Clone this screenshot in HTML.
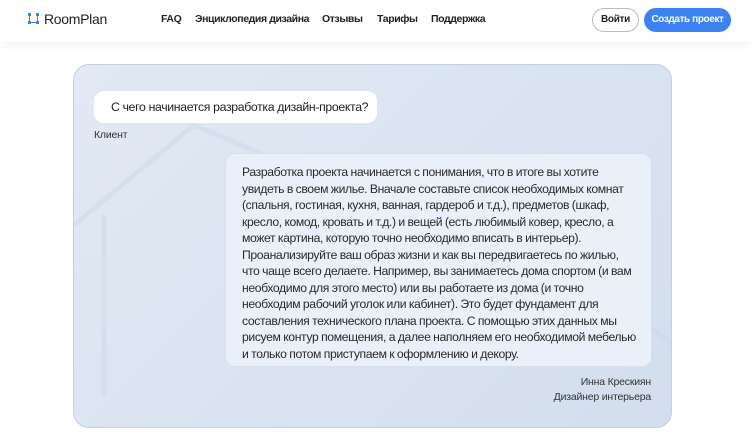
<!DOCTYPE html>
<html><head><meta charset="utf-8"><style>
*{margin:0;padding:0;box-sizing:border-box}
body{width:751px;height:435px;overflow:hidden;background:#fff;font-family:"Liberation Sans",sans-serif;color:#222;position:relative}
.hdr{position:absolute;left:0;top:0;width:751px;height:42px;background:#fff;box-shadow:0 2px 10px rgba(0,0,0,.06)}
.logo{position:absolute;left:44px;top:11px;font-size:14px;color:#222;letter-spacing:-0.3px}
.nav{position:absolute;top:13px;font-size:10.5px;font-weight:bold;color:#222;letter-spacing:-0.4px;white-space:nowrap}
.btn1{position:absolute;left:592px;top:8px;width:47px;height:24px;border:1px solid #bbb;border-radius:12px;font-size:10px;font-weight:bold;text-align:center;line-height:22px;letter-spacing:-0.3px}
.btn2{position:absolute;left:644px;top:8px;width:87px;height:24px;background:#3b82f0;color:#fff;border-radius:12px;font-size:10px;font-weight:bold;text-align:center;line-height:24px;letter-spacing:-0.4px;white-space:nowrap}
.panel{position:absolute;left:73px;top:64px;width:599px;height:364px;border-radius:16px;background:linear-gradient(135deg,#e2e9f4,#d3deee);border:1px solid #c5d0de;overflow:hidden}
.q{position:absolute;left:20px;top:26px;width:283px;height:32px;background:#fff;border-radius:10px;font-size:12.3px;line-height:32px;padding-left:17px;color:#222;white-space:nowrap;letter-spacing:-0.35px}
.small{position:absolute;font-size:10.5px;color:#333;letter-spacing:-0.2px}
.a{position:absolute;left:151px;top:88px;width:427px;height:214px;background:#e9f0f9;border:1px solid #d6e0ec;border-radius:10px;padding:10px 6px 0 16px;font-size:12.2px;line-height:16.5px;color:#2a2a2a;letter-spacing:-0.38px;word-spacing:-0.3px;white-space:nowrap}
</style></head><body>
<div class="hdr">
<svg style="position:absolute;left:28px;top:13px" width="11" height="11" viewBox="0 0 11 11"><g fill="#3b82f0"><rect x="0" y="0" width="3" height="3"/><rect x="8" y="0" width="3" height="3"/><rect x="0" y="8" width="3" height="3"/><rect x="8" y="8" width="3" height="3"/></g><g stroke="#3b82f0" stroke-width="1"><line x1="1.5" y1="3" x2="1.5" y2="8"/><line x1="9.5" y1="3" x2="9.5" y2="8"/><line x1="3" y1="9.5" x2="8" y2="9.5"/></g></svg>
<div class="logo">RoomPlan</div>
<div class="nav" style="left:161px">FAQ</div>
<div class="nav" style="left:195px">Энциклопедия дизайна</div>
<div class="nav" style="left:322px">Отзывы</div>
<div class="nav" style="left:377px">Тарифы</div>
<div class="nav" style="left:431px">Поддержка</div>
<div class="btn1">Войти</div>
<div class="btn2">Создать проект</div>
</div>
<div class="panel">
<svg style="position:absolute;left:0;top:0" width="599" height="364"><g stroke="#cdd8e7" stroke-width="5" fill="none" opacity=".5"><path d="M0 160 L120 60 L260 120"/><path d="M30 150 L30 330"/><path d="M480 300 L560 250 L599 280"/></g></svg>
<div class="q">С чего начинается разработка дизайн-проекта?</div>
<div class="small" style="left:20px;top:64px">Клиент</div>
<div class="a">Разработка проекта начинается с понимания, что в итоге вы хотите<br>увидеть в своем жилье. Вначале составьте список необходимых комнат<br>(спальня, гостиная, кухня, ванная, гардероб и т.д.), предметов (шкаф,<br>кресло, комод, кровать и т.д.) и вещей (есть любимый ковер, кресло, а<br>может картина, которую точно необходимо вписать в интерьер).<br>Проанализируйте ваш образ жизни и как вы передвигаетесь по жилью,<br>что чаще всего делаете. Например, вы занимаетесь дома спортом (и вам<br>необходимо для этого место) или вы работаете из дома (и точно<br>необходим рабочий уголок или кабинет). Это будет фундамент для<br>составления технического плана проекта. С помощью этих данных мы<br>рисуем контур помещения, а далее наполняем его необходимой мебелью<br>и только потом приступаем к оформлению и декору.</div>
<div class="small" style="right:20px;top:310px;text-align:right;line-height:15px">Инна Крескиян<br>Дизайнер интерьера</div>
</div>
</body></html>
